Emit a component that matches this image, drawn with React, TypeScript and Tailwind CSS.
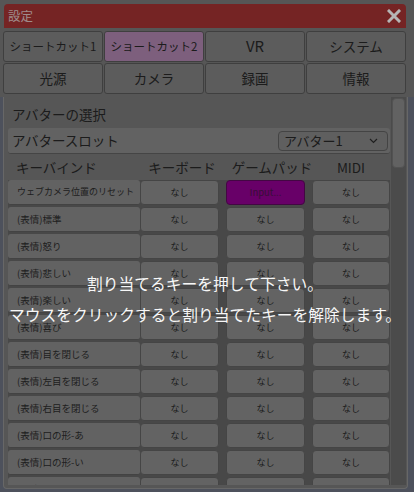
import React from "react";

const rows = [
  "ウェブカメラ位置のリセット",
  "(表情)標準",
  "(表情)怒り",
  "(表情)悲しい",
  "(表情)楽しい",
  "(表情)喜び",
  "(表情)目を閉じる",
  "(表情)左目を閉じる",
  "(表情)右目を閉じる",
  "(表情)口の形-あ",
  "(表情)口の形-い",
  "(表情)口の形-う",
];

function KeyButton({ w, active }: { w: string; active?: boolean }) {
  if (active) {
    return (
      <div className={`${w} h-full rounded-[4px] border border-[#5a0a5a] bg-[#8b008b] flex items-center justify-center text-[9.5px] text-[#4a144a]`}>
        Input...
      </div>
    );
  }
  return (
    <div className={`${w} h-full rounded-[4px] border border-[#5d5d5d] bg-[#858585] flex items-center justify-center text-[9px] text-[#262626]`}>
      なし
    </div>
  );
}

export default function App() {
  return (
    <div className="relative w-[414px] h-[492px] overflow-hidden bg-[#676d7b] font-['Noto_Sans_CJK_JP','Noto_Sans',sans-serif] text-[#262626]">
      {/* header */}
      <div className="bg-[#737373] pt-[4px] pl-[3px] pr-[8px] pb-[3px]">
        <div className="ml-[1px] h-[24px] rounded-t-[4px] bg-[#9d3030] flex items-center justify-between pl-[4px] pr-[5px]">
          <span className="text-[12.5px] text-[#d5bbbb] leading-none">設定</span>
          <svg width="14" height="14" viewBox="0 0 14 14">
            <path d="M2 2 L12 12 M12 2 L2 12" stroke="#f2f2f2" strokeWidth="3" strokeLinecap="square" />
          </svg>
        </div>
        <div className="mt-[3px] grid grid-cols-4 gap-[1px]">
          {[
            { t: "ショートカット1", c: "text-[11.5px]" },
            { t: "ショートカット2", c: "text-[11.5px]", sel: true },
            { t: "VR", c: "text-[15px]" },
            { t: "システム", c: "text-[13.5px]" },
            { t: "光源", c: "text-[13.5px]" },
            { t: "カメラ", c: "text-[13.5px]" },
            { t: "録画", c: "text-[13.5px]" },
            { t: "情報", c: "text-[13.5px]" },
          ].map((b) => (
            <div
              key={b.t}
              className={`h-[31px] rounded-[3px] border border-[#555555] flex items-center justify-center ${b.c} ${b.sel ? "bg-[#a77fa7]" : "bg-[#7b7b7b]"}`}
            >
              {b.t}
            </div>
          ))}
        </div>
      </div>

      {/* panel */}
      <div className="ml-[3px] w-[405px] h-[392px] border-x border-b border-[#8a8a8a] rounded-b-[4px] bg-[#737373] flex flex-col">
        <div className="h-[388px] flex">
          <div className="w-[387px] h-full overflow-hidden pl-[4px] pr-[1px]">
            <div className="h-[31px] pt-[4px] pl-[4px] flex items-center text-[13.5px]">アバターの選択</div>
            <div className="h-[26px] rounded-[3px] bg-[#838383] border-b border-[#5d5d5d] flex items-center justify-between pl-[4px] pr-[2px]">
              <span className="text-[13.5px]">アバタースロット</span>
              <div className="w-[110px] h-[20px] rounded-[4px] border border-[#5b5b5b] bg-[#7f7f7f] flex items-center justify-between pl-[5px] pr-[9px]">
                <span className="text-[13px] leading-none">アバター1</span>
                <svg width="9" height="6" viewBox="0 0 9 6">
                  <path d="M1 1 L4.5 4.5 L8 1" stroke="#2a2a2a" strokeWidth="1.2" fill="none" />
                </svg>
              </div>
            </div>
            <div className="h-[26px] flex items-center text-[13.5px]">
              <div className="w-[132px] pl-[8px]">キーバインド</div>
              <div className="w-[84px] text-center">キーボード</div>
              <div className="w-[96px] text-center">ゲームパッド</div>
              <div className="w-[62px] text-center">MIDI</div>
            </div>
            <div className="flex flex-col gap-[2px] bg-[#606060]">
              {rows.map((r, i) => (
                <div key={r} className="h-[25px] flex">
                  <div className={`w-[132px] h-full rounded-[3px] bg-[#838383] border-b border-[#5a5a5a] flex items-center pl-[9px] whitespace-nowrap ${i === 0 ? "text-[9px]" : "text-[9.5px]"} text-[#2a2a2a]`}>
                    {r}
                  </div>
                  <KeyButton w="w-[79px]" />
                  <div className="w-[7px]" />
                  <KeyButton w="w-[79px]" active={i === 0} />
                  <div className="w-[7px]" />
                  <KeyButton w="w-[78px]" />
                </div>
              ))}
            </div>
          </div>
          <div className="w-[15px] h-full bg-[#656565] pt-[1px] px-[1px]">
            <div className="h-[70px] rounded-[4px] border border-[#6e6e6e] bg-[#838383]" />
          </div>
        </div>
      </div>

      {/* overlay */}
      <div className="absolute inset-0 bg-black/25 flex flex-col items-center pt-[268px] pr-[4px] text-[15.75px] leading-[31px] text-[#f7f7f7] whitespace-nowrap">
        <div>割り当てるキーを押して下さい。</div>
        <div>マウスをクリックすると割り当てたキーを解除します。</div>
      </div>
    </div>
  );
}
